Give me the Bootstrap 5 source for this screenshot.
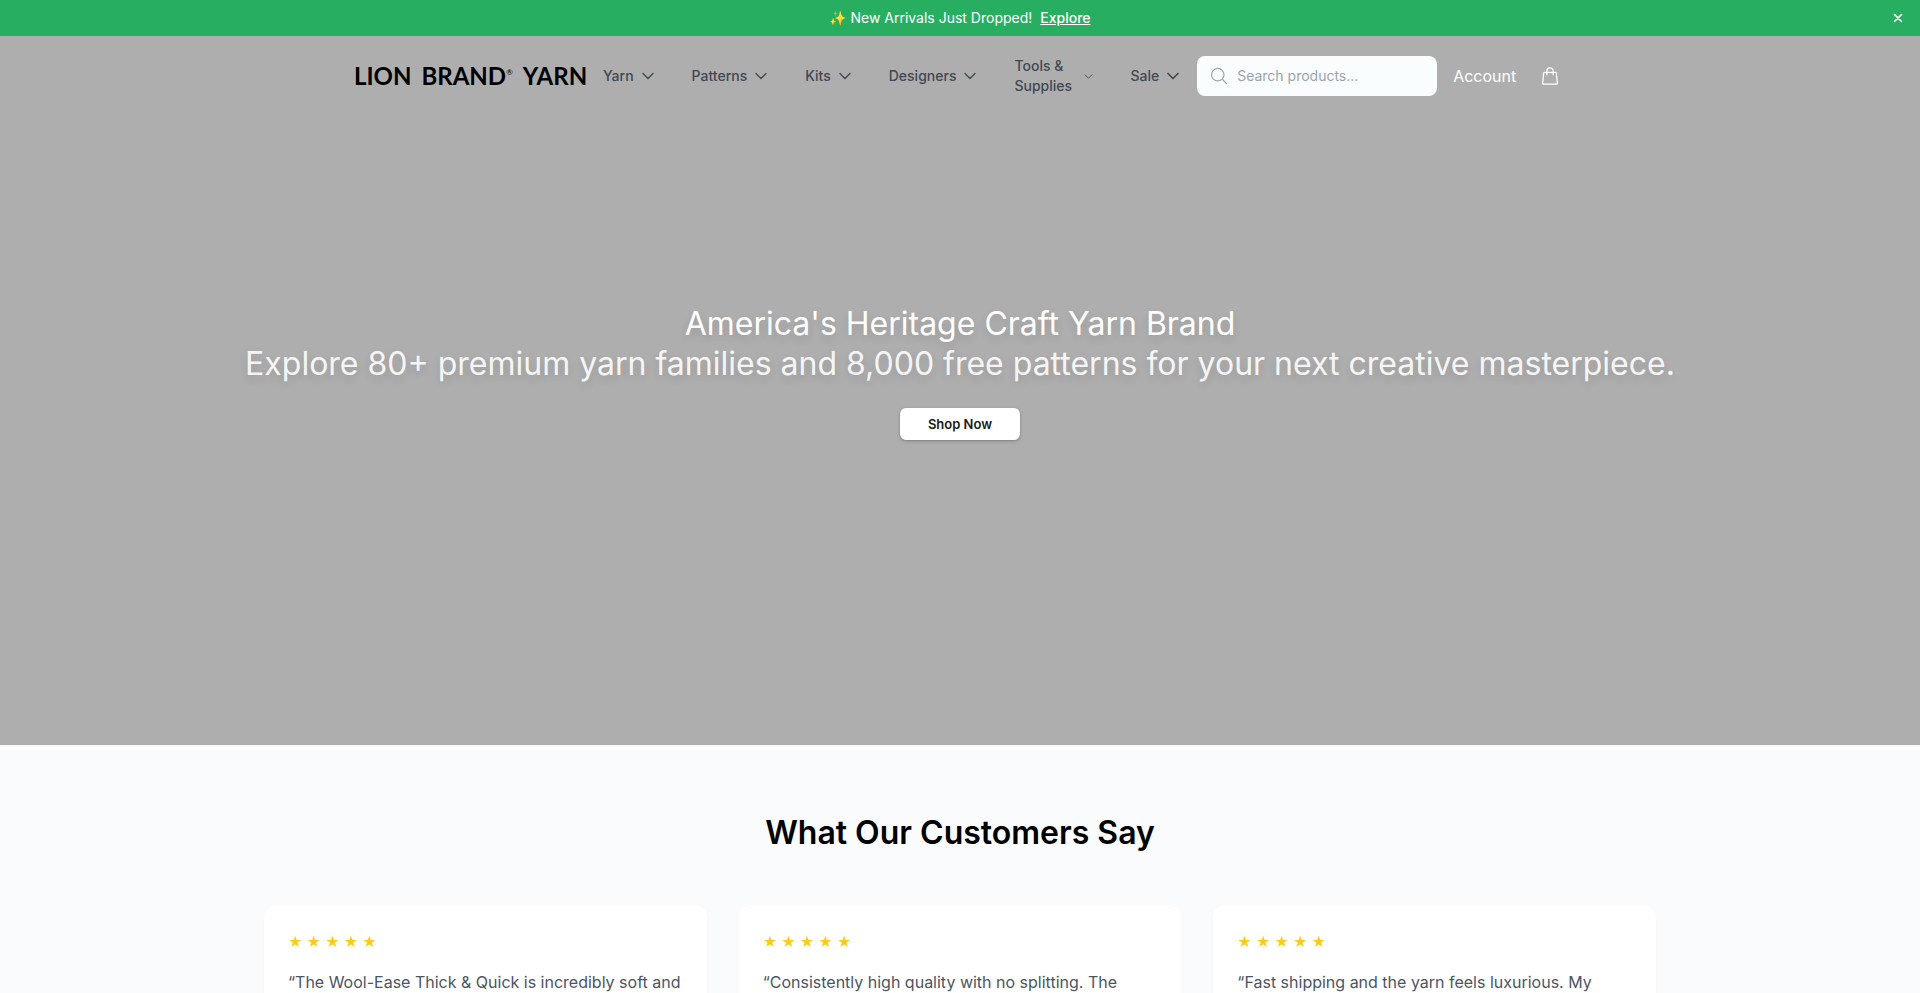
<!DOCTYPE html>
<html lang="en">
<head>
<meta charset="utf-8">
<meta name="viewport" content="width=device-width, initial-scale=1">
<title>Lion Brand Yarn</title>
<link href="https://cdn.jsdelivr.net/npm/bootstrap@5.3.0/dist/css/bootstrap.min.css" rel="stylesheet">
<style>
  body { font-family: Inter, "Noto Sans", sans-serif; background: #fafbfd; height: 100vh; overflow: hidden; }
  svg { fill: none; stroke: currentColor; stroke-linecap: round; stroke-linejoin: round; flex: none; }
  .promo { background: #27ae60; color: #fff; height: 36px; padding: 0 16px 0 28px; font-size: 14px; line-height: 20px; }
  .promo .btn { color: #fff; }
  .shop-nav { max-width: 1280px; padding: 0 32px; min-height: 80px; }
  .brand { width: 235px; gap: 10px; padding-left: 2px; font: 700 24px/32px Lato, sans-serif; color: #000; white-space: nowrap; }
  .brand sup { font-size: 8px; font-weight: 400; top: -10px; vertical-align: baseline; }
  .menu { gap: 4px; }
  .menu-btn { display: flex; align-items: center; gap: 6px; padding: 8px 16px; border: 0; background: none; color: #414753; font-size: 14px; font-weight: 500; line-height: 20px; text-align: left; }
  .menu-two { width: 63px; }
  .search { width: 240px; height: 40px; background: #fafdfe; border-radius: 8px; padding: 0 12px; color: #9ca3af; }
  .search input { min-width: 0; height: 20px; border: 0; background: none; font-size: 14px; line-height: 20px; outline: 0; }
  .search input::placeholder { color: #9ca3af; opacity: 1; }
  .hero { min-height: 75vh; background: #aeaeae; color: #fff; }
  .hero-line { font-size: 32px; line-height: 40px; font-weight: 400; text-shadow: 0 4px 8px rgba(0,0,0,.12); }
  .hero-sub { color: #f5f5f5; }
  .shop-btn { width: 120px; height: 32px; padding: 0; background: #fff; color: #1a1a1a; font-size: 13px; font-weight: 600; border-radius: 6px; box-shadow: 0 1px 3px rgba(0,0,0,.3); }
  .reviews { padding: 64px 0; }
  .reviews h2 { font-size: 32px; line-height: 48px; font-weight: 600; color: #000; margin-bottom: 48px; }
  .review-row { max-width: 1392px; gap: 32px; }
  .review { flex: 1 1 0; min-height: 240px; padding: 24px; background: #fff; border-radius: 12px; box-shadow: 0 1px 3px rgba(0,0,0,.03); }
  .stars { color: #facc15; font-size: 14px; line-height: 26px; margin-bottom: 14px; }
  .review p { color: #4b5563; font-size: 16px; line-height: 26px; margin: 0; }
</style>
</head>
<body>
<div class="position-absolute top-0 start-0 w-100">
  <div class="promo d-flex align-items-center">
    <div class="flex-fill text-center">✨ New Arrivals Just Dropped! <a href="#" class="text-white fw-medium ms-1">Explore</a></div>
    <button type="button" class="btn p-0 border-0 d-flex" aria-label="Dismiss">
      <svg width="12" height="12" viewBox="0 0 12 12" stroke-width="1.6"><path d="M2.5 2.5l7 7M9.5 2.5l-7 7"/></svg>
    </button>
  </div>
  <header class="shop-nav mx-auto d-flex align-items-center">
    <a href="#" class="brand d-flex text-decoration-none"><span>LION</span> <span>BRAND<sup>®</sup></span> <span>YARN</span></a>
    <nav class="menu d-flex align-items-center">
      <button class="menu-btn">Yarn <svg width="16" height="16" viewBox="0 0 24 24" stroke-width="2"><path d="M19.5 8.25l-7.5 7.5-7.5-7.5"/></svg></button>
      <button class="menu-btn">Patterns <svg width="16" height="16" viewBox="0 0 24 24" stroke-width="2"><path d="M19.5 8.25l-7.5 7.5-7.5-7.5"/></svg></button>
      <button class="menu-btn">Kits <svg width="16" height="16" viewBox="0 0 24 24" stroke-width="2"><path d="M19.5 8.25l-7.5 7.5-7.5-7.5"/></svg></button>
      <button class="menu-btn">Designers <svg width="16" height="16" viewBox="0 0 24 24" stroke-width="2"><path d="M19.5 8.25l-7.5 7.5-7.5-7.5"/></svg></button>
      <button class="menu-btn"><span class="menu-two">Tools &amp; Supplies</span> <svg width="11" height="11" viewBox="0 0 24 24" stroke-width="2"><path d="M19.5 8.25l-7.5 7.5-7.5-7.5"/></svg></button>
      <button class="menu-btn">Sale <svg width="16" height="16" viewBox="0 0 24 24" stroke-width="2.5"><path d="M19.5 8.25l-7.5 7.5-7.5-7.5"/></svg></button>
    </nav>
    <label class="search d-flex align-items-center gap-2">
      <svg width="20" height="20" viewBox="0 0 24 24" stroke-width="1.5"><path d="M21 21l-5.197-5.197m0 0A7.5 7.5 0 1 0 5.196 5.196a7.5 7.5 0 0 0 10.607 10.607z"/></svg>
      <input type="search" class="flex-fill p-0" placeholder="Search products..." aria-label="Search products">
    </label>
    <a href="#" class="text-white text-decoration-none ms-3">Account</a>
    <a href="#" class="text-white d-flex ms-auto p-2" aria-label="Cart">
      <svg width="20" height="20" viewBox="0 0 24 24" stroke-width="1.5"><path d="M15.75 10.5V6a3.75 3.75 0 1 0-7.5 0v4.5m11.356-1.993l1.263 12c.07.665-.45 1.243-1.119 1.243H4.25a1.125 1.125 0 0 1-1.12-1.243l1.264-12A1.125 1.125 0 0 1 5.513 7.5h12.974c.576 0 1.059.435 1.119 1.007z"/></svg>
    </a>
  </header>
</div>
<main>
  <section class="hero d-flex flex-column align-items-center justify-content-center text-center">
    <h1 class="hero-line m-0">America's Heritage Craft Yarn Brand</h1>
    <p class="hero-line hero-sub mb-4">Explore 80+ premium yarn families and 8,000 free patterns for your next creative masterpiece.</p>
    <button type="button" class="btn shop-btn border-0">Shop Now</button>
  </section>
  <section class="reviews">
    <h2 class="text-center">What Our Customers Say</h2>
    <div class="review-row mx-auto d-flex">
      <article class="review"><div class="stars">★ ★ ★ ★ ★</div><p>“The Wool-Ease Thick &amp; Quick is incredibly soft and</p></article>
      <article class="review"><div class="stars">★ ★ ★ ★ ★</div><p>“Consistently high quality with no splitting. The</p></article>
      <article class="review"><div class="stars">★ ★ ★ ★ ★</div><p>“Fast shipping and the yarn feels luxurious. My</p></article>
    </div>
  </section>
</main>
<script src="https://cdn.jsdelivr.net/npm/bootstrap@5.3.0/dist/js/bootstrap.bundle.min.js"></script>
</body>
</html>
